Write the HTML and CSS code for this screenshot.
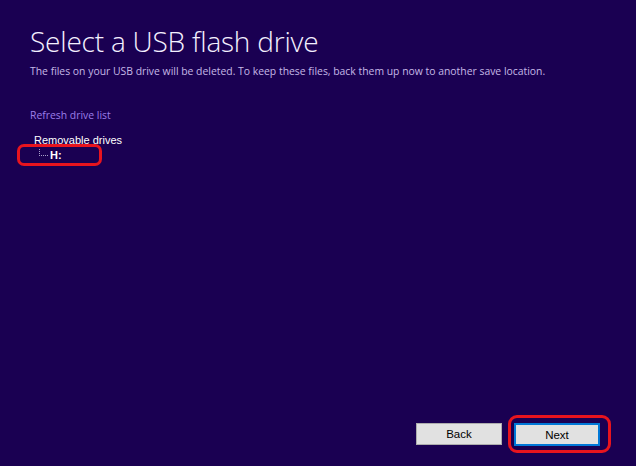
FILE: index.html
```html
<!DOCTYPE html>
<html>
<head>
<meta charset="utf-8">
<link rel="stylesheet" href="styles.css">
</head>
<body>
<div class="page">
  <h1 class="title">Select a USB flash drive</h1>
  <p class="subtitle">The files on your USB drive will be deleted. To keep these files, back them up now to another save location.</p>
  <a class="refresh">Refresh drive list</a>
  <div class="tree">
    <div class="tree-root">Removable drives</div>
    <div class="tree-item"><span class="branch"></span><span class="drive">H:</span></div>
    <div class="mark mark-drive"></div>
  </div>
  <div class="spacer"></div>
  <div class="footer">
    <button class="btn">Back</button>
    <div class="next-wrap">
      <button class="btn btn-default">Next</button>
      <div class="mark mark-next"></div>
    </div>
  </div>
</div>
</body>
</html>
```
FILE: styles.css
```css
html, body {
  margin: 0;
  padding: 0;
  height: 100%;
}
body {
  background: #1a0052;
  font-family: "Open Sans", "Noto Sans", sans-serif;
  color: #ffffff;
  overflow: hidden;
}
.page {
  height: 466px;
  box-sizing: border-box;
  padding: 22px 0 0 30px;
  display: flex;
  flex-direction: column;
}
.title {
  margin: 0;
  font-weight: 300;
  font-size: 28px;
  line-height: 38px;
  color: #f4f0ff;
  letter-spacing: -0.2px;
}
.subtitle {
  margin: 4px 0 0;
  font-size: 10.4px;
  line-height: 14px;
  color: #c5b8e6;
}
.refresh {
  margin-top: 30px;
  font-size: 10.4px;
  line-height: 14px;
  color: #9b7ee8;
  display: block;
}
.tree {
  position: relative;
  margin-top: 11px;
  padding-left: 4px;
  font-family: "Liberation Sans", Arial, sans-serif;
  font-size: 11px;
  line-height: 14px;
  color: #ffffff;
}
.tree-item {
  display: flex;
  align-items: flex-start;
  padding-left: 5px;
  margin-top: 1px;
}
.branch {
  width: 8px;
  height: 6px;
  border-left: 1px dotted #a8a0c8;
  border-bottom: 1px dotted #a8a0c8;
  margin-right: 2px;
  margin-top: 1px;
}
.drive {
  font-weight: bold;
  font-size: 11px;
}
.mark {
  position: absolute;
  border: 3px solid #e8141e;
  border-radius: 7px;
  box-sizing: border-box;
}
.mark-drive {
  left: -13px;
  top: 11px;
  width: 85px;
  height: 22px;
  border-width: 3.5px;
}
.spacer {
  flex: 1;
}
.footer {
  display: flex;
  justify-content: flex-end;
  align-items: center;
  gap: 12px;
  padding-right: 36px;
  margin-bottom: 20px;
}
.btn {
  width: 86px;
  height: 22px;
  background: #e1e1e1;
  border: 1px solid #adadad;
  font-family: "Liberation Sans", Arial, sans-serif;
  font-size: 11.5px;
  color: #000;
  padding: 0;
  box-sizing: border-box;
}
.btn-default {
  border: 2px solid #0078d7;
  height: 23px;
}
.next-wrap {
  position: relative;
}
.mark-next {
  left: -6px;
  top: -7px;
  width: 103px;
  height: 38px;
  border-radius: 9px;
}
```
